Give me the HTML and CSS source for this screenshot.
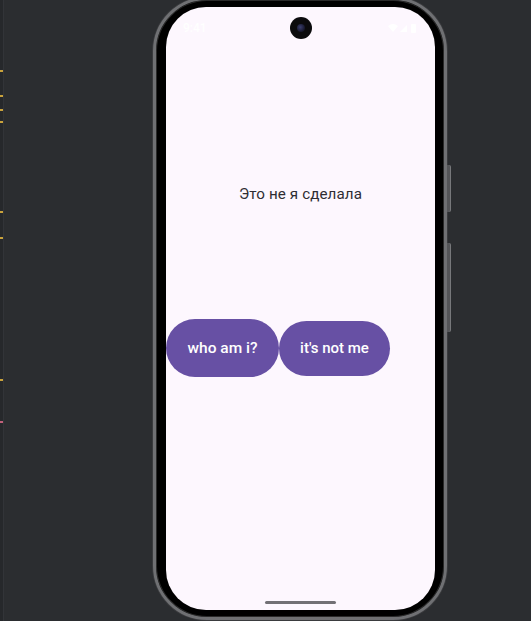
FILE: index.html
```html
<!DOCTYPE html>
<html lang="ru">
<head>
<meta charset="utf-8">
<title>Emulator</title>
<link rel="stylesheet" href="styles.css">
</head>
<body>
<div class="ide">
  <div class="gutter">
    <span class="mark m1"></span>
    <span class="mark m2"></span>
    <span class="mark m3"></span>
    <span class="mark m4"></span>
    <span class="mark m5"></span>
    <span class="mark m6"></span>
    <span class="mark m7"></span>
    <span class="mark pink m8"></span>
  </div>
  <div class="phone">
    <span class="side-btn power"></span>
    <span class="side-btn volume"></span>
    <div class="screen">
      <div class="status-bar">
        <span class="time">9:41</span>
        <span class="camera"><span class="lens"></span></span>
        <span class="status-icons">
          <svg width="30" height="10" viewBox="0 0 30 10">
            <path d="M0 3 Q5 -1 10 3 L5 9 Z" fill="#fff"/>
            <path d="M12 9 L19 2 L19 9 Z" fill="#fff"/>
            <rect x="23" y="1" width="5" height="9" rx="1" fill="#fff"/>
          </svg>
        </span>
      </div>
      <p class="message">Это не я сделала</p>
      <div class="buttons">
        <button class="pill pill-big">who am i?</button>
        <button class="pill">it's not me</button>
      </div>
      <div class="spacer"></div>
      <div class="gesture"></div>
    </div>
  </div>
</div>
</body>
</html>
```
FILE: styles.css
```css
html, body {
  margin: 0;
  padding: 0;
  height: 100%;
  background: #2b2d30;
  overflow: hidden;
}

.ide {
  display: flex;
  height: 621px;
}

.gutter {
  width: 3px;
  display: flex;
  flex-direction: column;
  background: #26282b;
  border-right: 1px solid #323438;
}

.mark {
  display: block;
  width: 3px;
  height: 2px;
  background: #c9a23c;
  flex: none;
}
.mark.pink { background: #c0607a; }
.m1 { margin-top: 70px; }
.m2 { margin-top: 23px; }
.m3 { margin-top: 12px; }
.m4 { margin-top: 10px; }
.m5 { margin-top: 88px; }
.m6 { margin-top: 24px; }
.m7 { margin-top: 140px; }
.m8 { margin-top: 40px; }

.phone {
  position: relative;
  flex: none;
  margin-left: 149px;
  margin-top: -3px;
  width: 294px;
  height: 623px;
  box-sizing: border-box;
  border: 3px solid #6f7073;
  border-radius: 54px;
  background: #000;
  padding: 7px 9px 7px 10px;
  box-shadow: 0 0 0 1px #3a3b3e, inset 0 0 0 1px #2a2a2a;
}

.side-btn {
  position: absolute;
  right: -7px;
  width: 3px;
  background: #545558;
  border-right: 1px solid #77787b;
  border-radius: 0 2px 2px 0;
}
.side-btn.power { top: 165px; height: 47px; }
.side-btn.volume { top: 243px; height: 89px; }

.screen {
  height: 100%;
  background: #fdf7fe;
  border-radius: 40px;
  display: flex;
  flex-direction: column;
  align-items: center;
  overflow: hidden;
  font-family: Roboto, "Noto Sans", sans-serif;
}

.status-bar {
  align-self: stretch;
  display: flex;
  align-items: center;
  justify-content: space-between;
  padding: 10px 17px 0 17px;
  height: 22px;
}

.time {
  width: 40px;
  color: #fff;
  font-size: 12px;
  font-weight: 500;
}

.status-icons {
  width: 40px;
  display: flex;
  justify-content: flex-end;
}

.camera {
  width: 22px;
  height: 22px;
  border-radius: 50%;
  background: #0b0b0d;
  display: flex;
  align-items: center;
  justify-content: center;
}

.lens {
  width: 8px;
  height: 8px;
  border-radius: 50%;
  background: radial-gradient(circle at 40% 40%, #3b3f6e 0, #1a1b33 60%, #0b0b0d 100%);
}

.message {
  margin: 147px 0 0 0;
  font-size: 15.2px;
  line-height: 17px;
  color: #2f2d33;
  letter-spacing: 0.1px;
}

.buttons {
  align-self: stretch;
  display: flex;
  align-items: center;
  margin-top: 116px;
}

.pill {
  border: none;
  background: #6750a4;
  color: #fff;
  font-family: Roboto, "Noto Sans", sans-serif;
  font-size: 15px;
  font-weight: 500;
  height: 55px;
  width: 111px;
  border-radius: 28px;
  padding: 0;
}

.pill-big {
  height: 58px;
  width: 113px;
  border-radius: 29px;
  font-size: 15.5px;
}

.spacer { flex: 1; }

.gesture {
  width: 71px;
  height: 3px;
  border-radius: 2px;
  background: #727075;
  margin-bottom: 6px;
}
```
